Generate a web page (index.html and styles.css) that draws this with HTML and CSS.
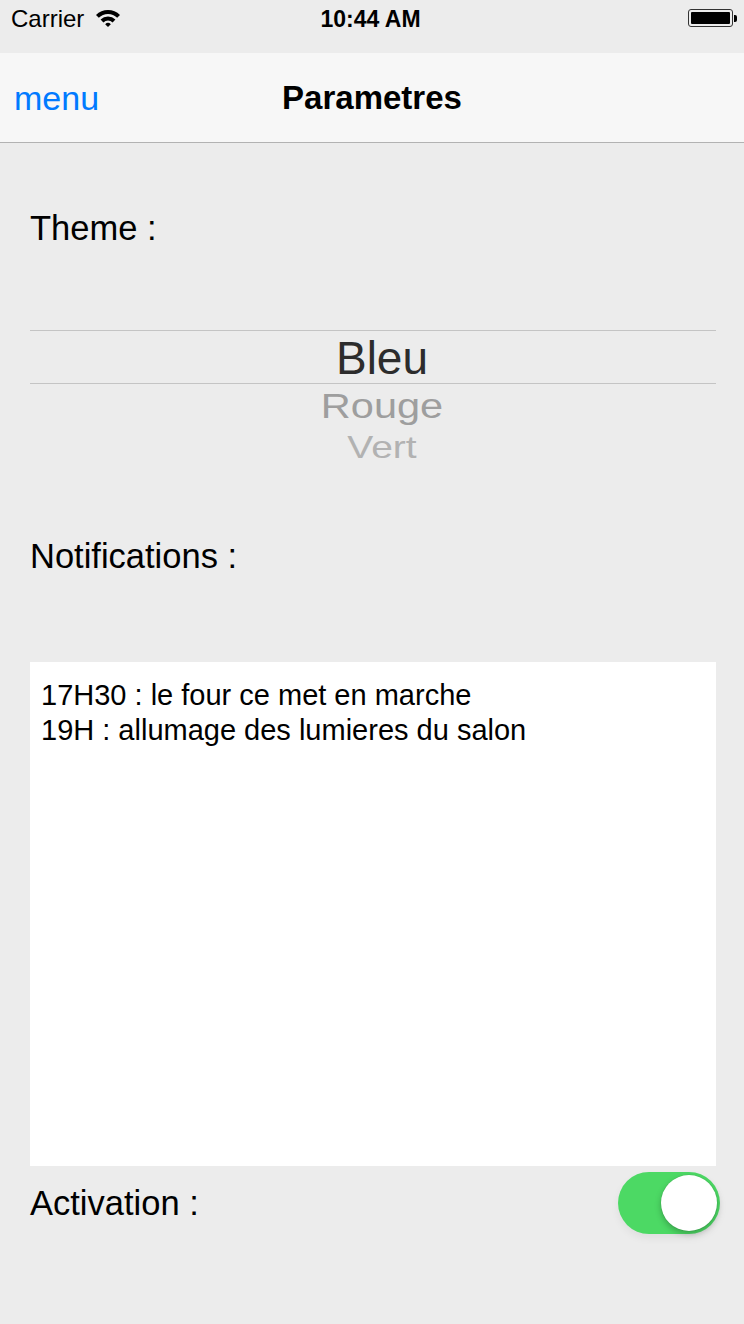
FILE: index.html
```html
<!DOCTYPE html>
<html lang="fr">
<head>
<meta charset="utf-8">
<title>Parametres</title>
<link rel="stylesheet" href="styles.css">
</head>
<body>
<div class="screen">
  <div class="status">
    <div class="status-left">
      <span class="carrier">Carrier</span>
      <svg class="wifi" width="24" height="17" viewBox="0 0 24 17">
        <path d="M-0.02 4.98 A17 17 0 0 1 24.02 4.98 L21.19 7.81 A13 13 0 0 0 2.81 7.81 Z"/>
        <path d="M4.58 9.58 A10.5 10.5 0 0 1 19.42 9.58 L16.6 12.4 A6.5 6.5 0 0 0 7.4 12.4 Z"/>
        <path d="M9.17 14.17 A4 4 0 0 1 14.83 14.17 L12 17 Z"/>
      </svg>
    </div>
    <div class="time">10:44 AM</div>
    <div class="status-right">
      <div class="battery"><div class="battery-fill"></div></div>
      <div class="battery-tip"></div>
    </div>
  </div>
  <div class="nav">
    <div class="nav-left">menu</div>
    <div class="nav-title">Parametres</div>
    <div class="nav-right"></div>
  </div>
  <div class="content">
    <div class="label theme-label">Theme :</div>
    <div class="picker">
      <div class="pick pick-selected">Bleu</div>
      <div class="pick pick-next">Rouge</div>
      <div class="pick pick-far">Vert</div>
    </div>
    <div class="label notif-label">Notifications :</div>
    <div class="notes">17H30 : le four ce met en marche<br>19H : allumage des lumieres du salon</div>
    <div class="activation">
      <div class="label">Activation :</div>
      <div class="toggle"><div class="knob"></div></div>
    </div>
  </div>
</div>
</body>
</html>
```

FILE: styles.css
```css
html, body {
  margin: 0;
  padding: 0;
}
body {
  background: #ececec;
  font-family: "Liberation Sans", Arial, sans-serif;
  color: #000;
}
.screen {
  width: 744px;
  min-height: 1324px;
  background: #ececec;
}
.status {
  height: 53px;
  box-sizing: border-box;
  padding: 5px 7px 0 11px;
  display: grid;
  grid-template-columns: 1fr auto 1fr;
  align-items: start;
  font-size: 24px;
  line-height: 28px;
}
.status-left {
  display: flex;
  align-items: flex-start;
}
.carrier {
  display: block;
}
.wifi {
  margin-left: 12px;
  margin-top: 5px;
  fill: #000;
}
.time {
  font-weight: bold;
  font-size: 23px;
  margin-right: 7px;
}
.status-right {
  display: flex;
  justify-content: flex-end;
  align-items: flex-start;
  padding-top: 4px;
}
.battery {
  width: 45px;
  height: 18px;
  box-sizing: border-box;
  border: 1px solid #333;
  border-radius: 3px;
  padding: 2px;
}
.battery-fill {
  width: 100%;
  height: 100%;
  background: #000;
  border-radius: 1px;
}
.battery-tip {
  width: 3px;
  height: 7px;
  margin-top: 5.5px;
  margin-left: 1px;
  background: #000;
  border-radius: 0 2px 2px 0;
}
.nav {
  height: 90px;
  box-sizing: border-box;
  background: #f7f7f7;
  border-bottom: 1px solid #b2b2b2;
  display: grid;
  grid-template-columns: 1fr auto 1fr;
  align-items: center;
  padding: 0 14px;
  font-size: 34px;
  line-height: 40px;
}
.nav-left {
  color: #007aff;
}
.nav-title {
  font-weight: bold;
  font-size: 33px;
}
.content {
  padding: 0 24px 0 30px;
}
.label {
  font-size: 34.5px;
  line-height: 40px;
}
.theme-label {
  margin-top: 65px;
}
.picker {
  margin-top: 82px;
  margin-right: 4px;
  text-align: center;
}
.pick {
  padding-left: 18px;
}
.pick-selected {
  border-top: 1px solid #c4c4c4;
  border-bottom: 1px solid #c4c4c4;
  font-size: 46px;
  line-height: 52px;
  color: #2c2c2c;
  padding-top: 1px;
  height: 51px;
}
.pick-next {
  font-size: 41.5px;
  line-height: 44px;
  color: #9e9e9e;
  transform: scaleY(0.86);
}
.pick-far {
  font-size: 39px;
  line-height: 40px;
  color: #b2b2b2;
  transform: scaleY(0.8);
}
.notif-label {
  margin-top: 68px;
}
.notes {
  margin-top: 86px;
  margin-right: 4px;
  height: 504px;
  box-sizing: border-box;
  background: #fff;
  padding: 16px 11px;
  font-size: 29px;
  line-height: 35px;
}
.activation {
  margin-top: 6px;
  height: 62px;
  display: flex;
  align-items: center;
  justify-content: space-between;
}
.toggle {
  width: 102px;
  height: 62px;
  border-radius: 31px;
  background: #4cd964;
  display: flex;
  align-items: center;
  justify-content: flex-end;
  padding-right: 3px;
  box-sizing: border-box;
  box-shadow: 0 4px 8px rgba(0, 0, 0, 0.06);
}
.knob {
  width: 56px;
  height: 56px;
  border-radius: 50%;
  background: #fff;
  box-shadow: 0 3px 6px rgba(0, 0, 0, 0.25), 0 0 0 0.5px rgba(0, 0, 0, 0.08);
}
```
